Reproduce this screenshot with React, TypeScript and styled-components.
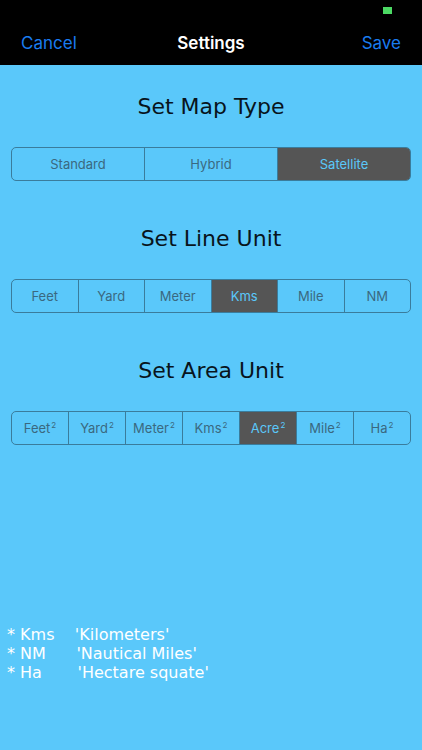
import React, {useState} from 'react';
import styled, {createGlobalStyle} from 'styled-components';

const GlobalStyle = createGlobalStyle`
	html, body {
		margin: 0;
		padding: 0;
		background: #5ac8fa;
	}
	* {
		box-sizing: border-box;
	}
`;

const Screen = styled.div`
	width: 422px;
	height: 750px;
	display: flex;
	flex-direction: column;
	background: #5ac8fa;
	font-family: Inter, 'Liberation Sans', sans-serif;
`;

const StatusBar = styled.div`
	height: 22px;
	display: flex;
	justify-content: flex-end;
	padding: 7px 30px 0 0;
	background: #000;
`;

const Battery = styled.div`
	width: 9px;
	height: 7px;
	background: #4cd964;
`;

const NavBar = styled.div`
	height: 43px;
	display: flex;
	align-items: center;
	justify-content: space-between;
	padding: 0 21px 0 21px;
	background: #000;
	position: relative;
`;

const NavButton = styled.button`
	border: 0;
	padding: 0;
	background: none;
	color: #1a7cf0;
	font-family: Inter, 'Liberation Sans', sans-serif;
	font-size: 17px;
	margin-top: -1px;
`;

const NavTitle = styled.div`
	position: absolute;
	left: 0;
	right: 0;
	text-align: center;
	color: #fff;
	font-size: 17px;
	font-weight: 600;
	pointer-events: none;
	margin-top: -1px;
`;

const Content = styled.div`
	display: flex;
	flex-direction: column;
	padding: 0 11px;
`;

const Heading = styled.h2<{$top: number}>`
	margin: 0;
	font-family: 'DejaVu Sans', Verdana, sans-serif;
	font-weight: normal;
	font-size: 22px;
	color: #08141c;
	text-align: center;
	margin-top: ${(p) => p.$top}px;
	line-height: 26px;
`;

const Segmented = styled.div<{$top: number}>`
	display: flex;
	height: 34px;
	margin-top: ${(p) => p.$top}px;
	border: 1px solid #3a7c9c;
	border-radius: 5px;
	overflow: hidden;
`;

const Segment = styled.button<{$active: boolean}>`
	flex: 1;
	min-width: 0;
	border: 0;
	padding: 0;
	border-left: 1px solid #3a7c9c;
	background: ${(p) => (p.$active ? '#555555' : 'transparent')};
	color: ${(p) => (p.$active ? '#5ac8fa' : '#3a6880')};
	font-family: Inter, 'Liberation Sans', sans-serif;
	font-size: 13px;
	&:first-child {
		border-left: 0;
	}
	sup {
		font-size: 8px;
		vertical-align: 5px;
		margin-left: 1px;
	}
`;

const Notes = styled.div`
	margin-top: auto;
	margin-bottom: 68px;
	padding-left: 7px;
	font-family: 'DejaVu Sans', Verdana, sans-serif;
	font-size: 16px;
	line-height: 19px;
	color: #fff;
	white-space: pre;
`;

type Group = {
	title: string;
	options: string[];
	squared?: boolean;
	initial: number;
	headTop: number;
	segTop: number;
};

const groups: Group[] = [
	{title: 'Set Map Type', options: ['Standard', 'Hybrid', 'Satellite'], initial: 2, headTop: 29, segTop: 27},
	{title: 'Set Line Unit', options: ['Feet', 'Yard', 'Meter', 'Kms', 'Mile', 'NM'], initial: 3, headTop: 45, segTop: 27},
	{title: 'Set Area Unit', options: ['Feet', 'Yard', 'Meter', 'Kms', 'Acre', 'Mile', 'Ha'], squared: true, initial: 4, headTop: 45, segTop: 27},
];

const SegmentGroup: React.FC<{group: Group}> = ({group}) => {
	const [selected, setSelected] = useState(group.initial);
	return (
		<>
			<Heading $top={group.headTop}>{group.title}</Heading>
			<Segmented $top={group.segTop}>
				{group.options.map((o, i) => (
					<Segment key={o} $active={i === selected} onClick={() => setSelected(i)}>
						{o}
						{group.squared ? <sup>2</sup> : null}
					</Segment>
				))}
			</Segmented>
		</>
	);
};

export default function App() {
	return (
		<Screen>
			<GlobalStyle />
			<StatusBar>
				<Battery />
			</StatusBar>
			<NavBar>
				<NavButton>Cancel</NavButton>
				<NavTitle>Settings</NavTitle>
				<NavButton>Save</NavButton>
			</NavBar>
			<Content>
				{groups.map((g) => (
					<SegmentGroup key={g.title} group={g} />
				))}
			</Content>
			<Notes>
				{"* Kms    'Kilometers'\n* NM      'Nautical Miles'\n* Ha       'Hectare squate'"}
			</Notes>
		</Screen>
	);
}
